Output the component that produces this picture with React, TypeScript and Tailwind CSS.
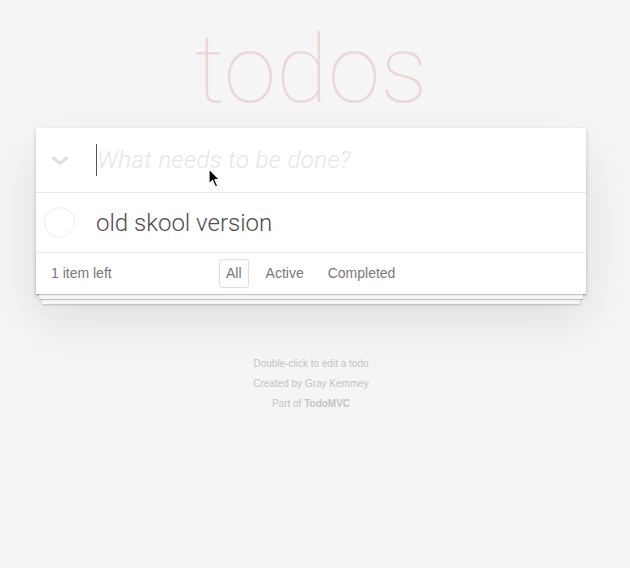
import { useState } from "react";

const FILTERS = ["All", "Active", "Completed"];

export default function App() {
  const [filter, setFilter] = useState("All");

  return (
    <div className="min-h-[568px] bg-[#f5f5f5] font-['Roboto','Liberation_Sans',sans-serif] text-[14px] text-[#4d4d4d]">
      <div className="ml-[36px] w-[550px] pt-[22px]">
        <h1 className="h-[106px] text-center text-[95px] font-thin leading-none text-[rgba(175,47,47,0.15)]">
          todos
        </h1>

        <section className="relative bg-white shadow-[0_2px_4px_rgba(0,0,0,0.2),0_25px_50px_rgba(0,0,0,0.1)]">
          <header className="flex h-[65px] items-center border-b border-[#e6e6e6]">
            <div className="flex w-[60px] justify-start pl-[15px] pt-[2px]">
              <svg width="18" height="12" viewBox="0 0 18 12" fill="none">
                <path d="M2.5 3 L9 8.5 L15.5 3" stroke="#e0e0e0" strokeWidth="3" strokeLinecap="round" strokeLinejoin="round" />
              </svg>
            </div>
            <div className="flex items-center">
              <span className="h-[32px] w-px bg-[#555]" />
              <span className="text-[24px] font-light italic tracking-[0.4px] text-[#e6e6e6]">What needs to be done?</span>
            </div>
          </header>

          <ul>
            <li className="flex h-[60px] items-center border-b border-[#ededed]">
              <div className="flex w-[60px] justify-start pl-[8px]">
                <span className="h-[31px] w-[31px] rounded-full border border-[#ededed]" />
              </div>
              <span className="text-[24px] font-light text-[#4d4d4d]">old skool version</span>
            </li>
          </ul>

          <footer className="relative flex h-[41px] items-center px-[15px] font-['Liberation_Sans',sans-serif] text-[#777] shadow-[0_1px_1px_rgba(0,0,0,0.2),0_8px_0_-3px_#f6f6f6,0_9px_1px_-3px_rgba(0,0,0,0.2),0_16px_0_-6px_#f6f6f6,0_17px_2px_-6px_rgba(0,0,0,0.2)]">
            <span className="w-[168px]">1 item left</span>
            <ul className="flex gap-[10px]">
              {FILTERS.map((f) => (
                <li key={f}>
                  <button
                    onClick={() => setFilter(f)}
                    className={
                      "rounded-[3px] border px-[6px] py-[3px] " +
                      (filter === f ? "border-[rgba(175,47,47,0.2)]" : "border-transparent")
                    }
                  >
                    {f}
                  </button>
                </li>
              ))}
            </ul>
          </footer>

          <svg className="absolute left-[172px] top-[40px]" width="14" height="20" viewBox="0 0 14 20">
            <path d="M1 1 L1 16 L4.5 12.5 L7.5 19 L9.8 18 L6.9 11.7 L11.5 11.7 Z" fill="#000" stroke="#fff" strokeWidth="1.2" strokeLinejoin="round" />
          </svg>
        </section>

        <footer className="mt-[60px] text-center font-['Liberation_Sans',sans-serif] text-[10px] leading-[20px] text-[#c4c4c4]">
          <p>Double-click to edit a todo</p>
          <p>Created by Gray Kemmey</p>
          <p>
            Part of <span className="font-bold">TodoMVC</span>
          </p>
        </footer>
      </div>
    </div>
  );
}
